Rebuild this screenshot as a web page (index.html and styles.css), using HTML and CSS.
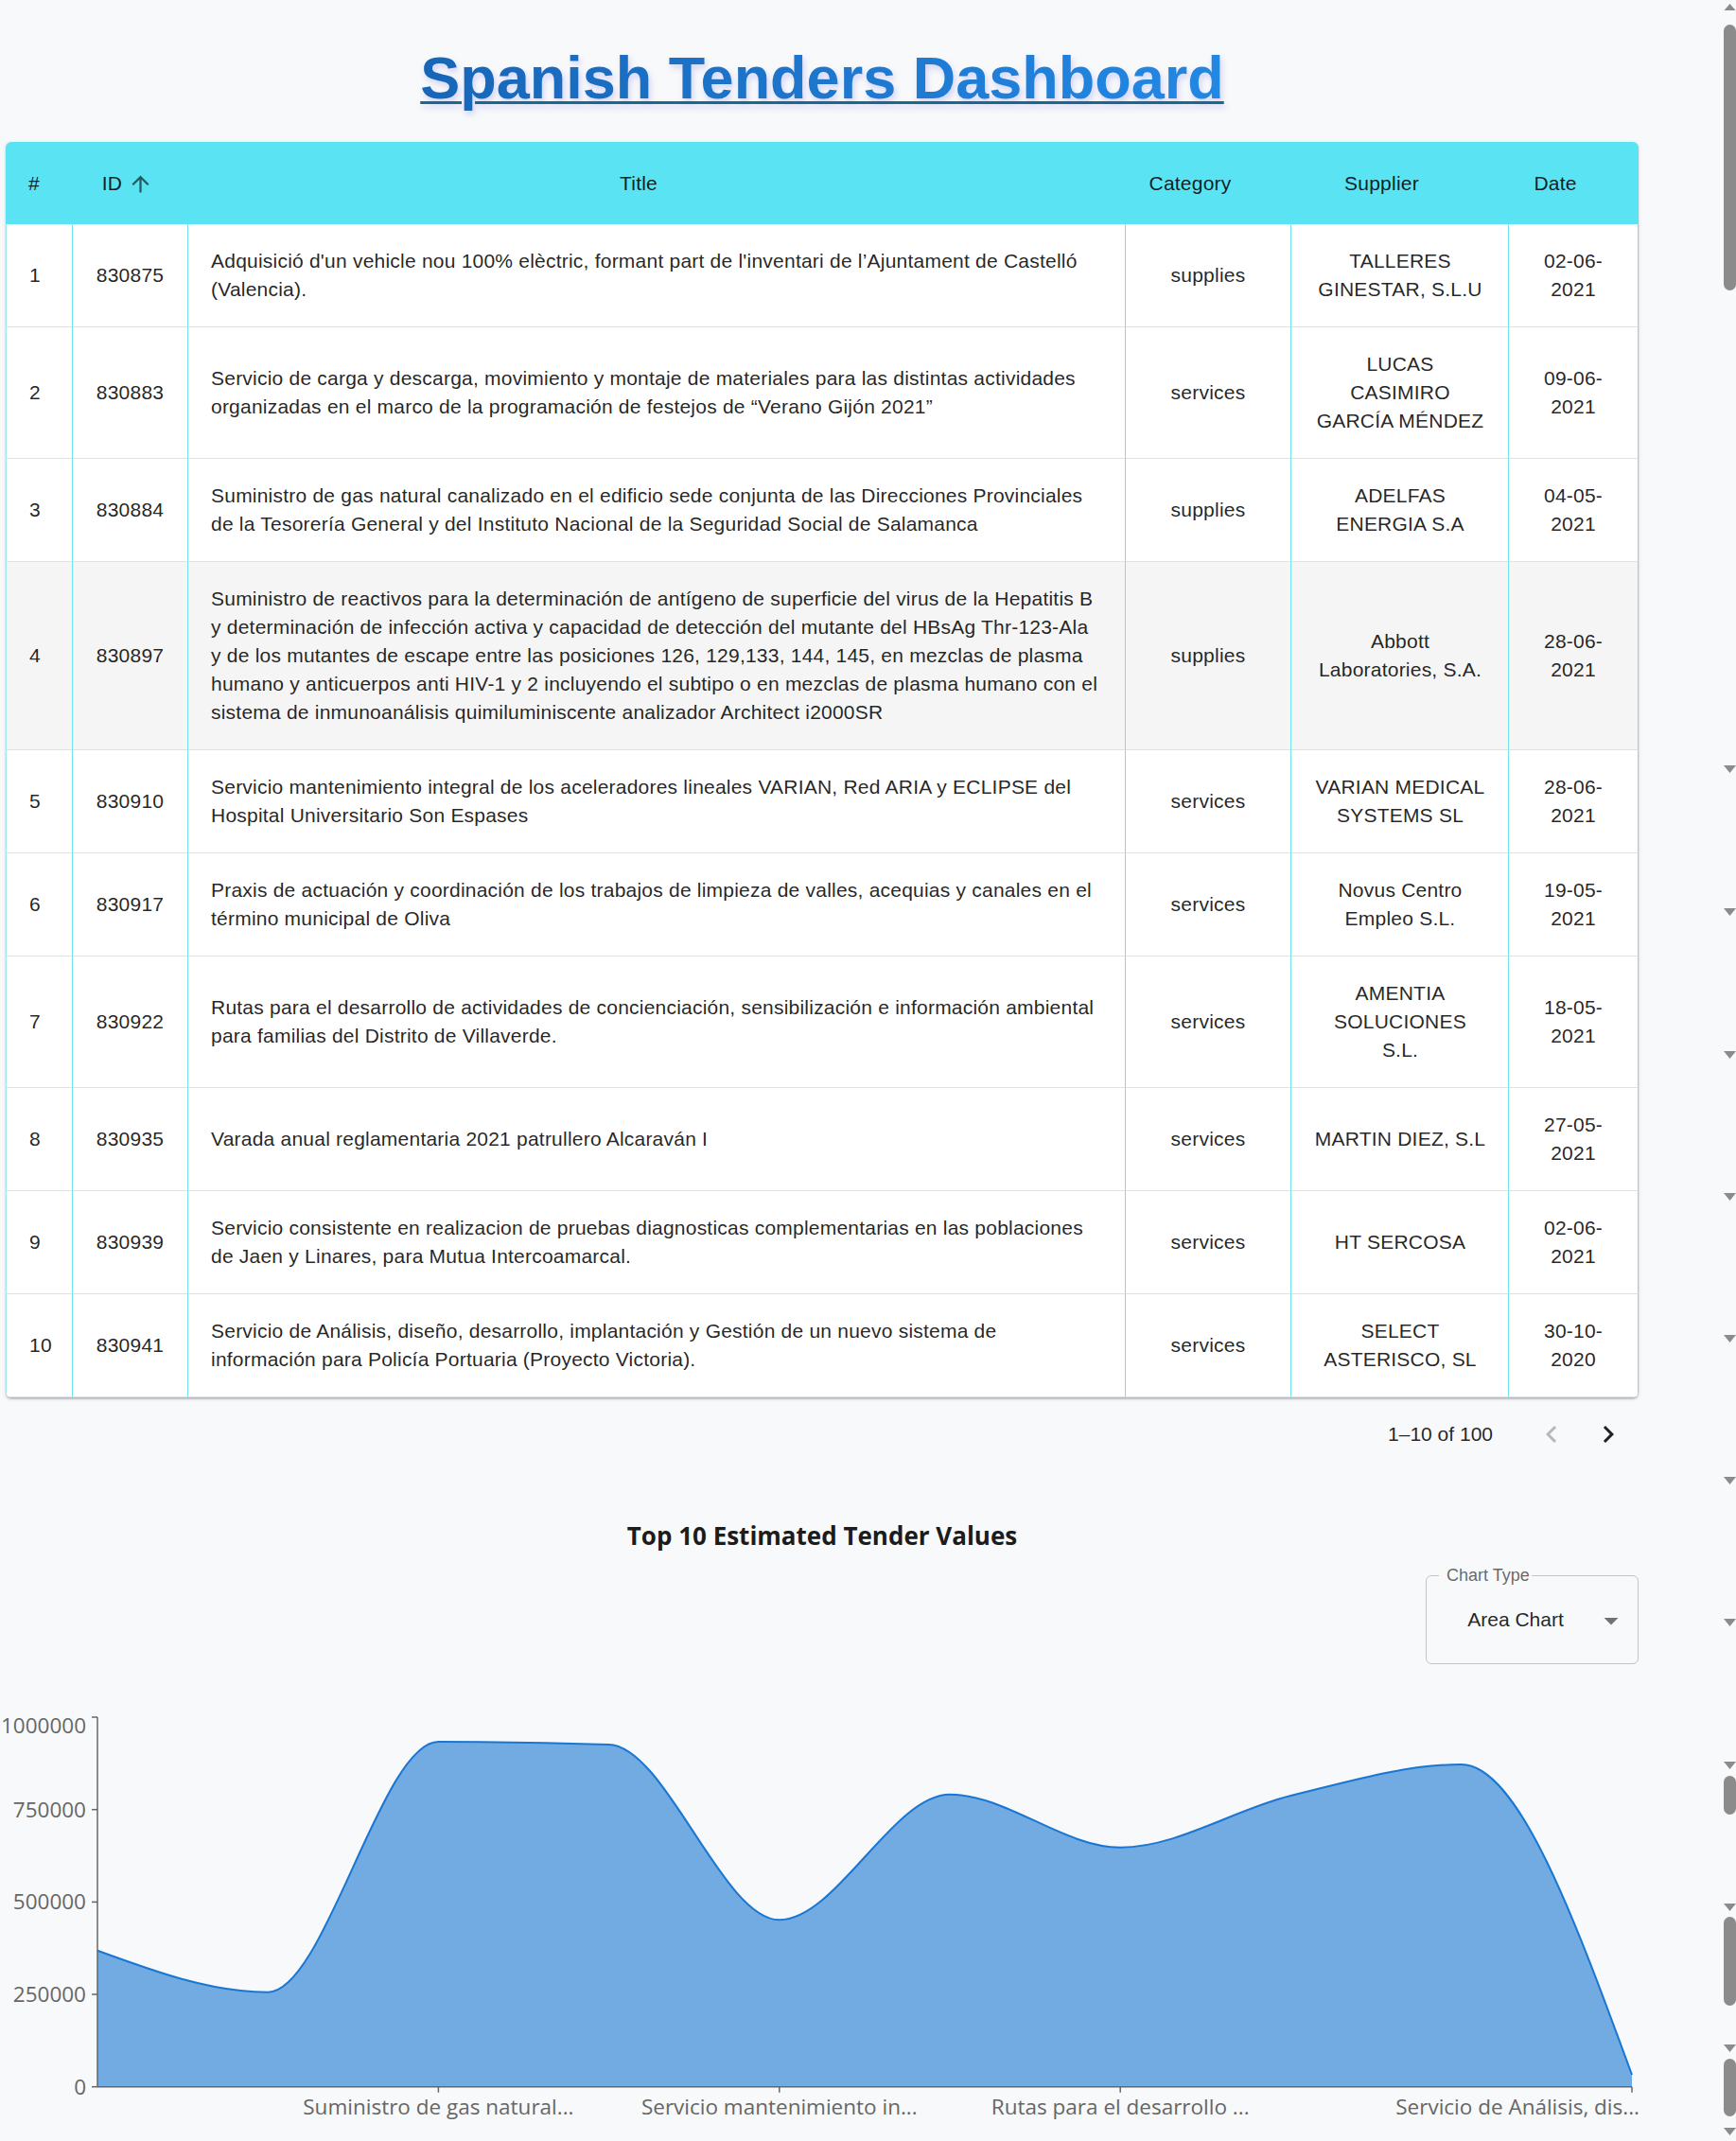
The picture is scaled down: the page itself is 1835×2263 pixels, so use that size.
FILE: index.html
```html
<!DOCTYPE html>
<html lang="es">
<head>
<meta charset="utf-8">
<title>Spanish Tenders Dashboard</title>
<link rel="stylesheet" href="styles.css">
</head>
<body>
<div class="page">
  <header class="title-wrap">
    <h1 class="title"><span class="title-inner" data-text="Spanish Tenders Dashboard"><span class="title-text">Spanish Tenders Dashboard</span></span></h1>
  </header>

  <div class="paper">
    <table class="tenders">
      <thead>
        <tr>
          <th class="c-num">#</th>
          <th class="c-id"><span class="sort-label">ID<svg class="sort-icon" viewBox="0 0 24 24"><path d="M4 12l1.41 1.41L11 7.83V20h2V7.83l5.58 5.59L20 12l-8-8-8 8z"/></svg></span></th>
          <th class="c-title"><span class="sort-label">Title<svg class="sort-icon off" viewBox="0 0 24 24"><path d="M4 12l1.41 1.41L11 7.83V20h2V7.83l5.58 5.59L20 12l-8-8-8 8z"/></svg></span></th>
          <th class="c-cat"><span class="sort-label">Category<svg class="sort-icon off" viewBox="0 0 24 24"><path d="M4 12l1.41 1.41L11 7.83V20h2V7.83l5.58 5.59L20 12l-8-8-8 8z"/></svg></span></th>
          <th class="c-sup"><span class="sort-label">Supplier<svg class="sort-icon off" viewBox="0 0 24 24"><path d="M4 12l1.41 1.41L11 7.83V20h2V7.83l5.58 5.59L20 12l-8-8-8 8z"/></svg></span></th>
          <th class="c-date"><span class="sort-label">Date<svg class="sort-icon off" viewBox="0 0 24 24"><path d="M4 12l1.41 1.41L11 7.83V20h2V7.83l5.58 5.59L20 12l-8-8-8 8z"/></svg></span></th>
        </tr>
      </thead>
      <tbody>
        <tr>
          <td class="num">1</td><td>830875</td>
          <td class="ttl">Adquisició d'un vehicle nou 100% elèctric, formant part de l'inventari de l’Ajuntament de Castelló (Valencia).</td>
          <td>supplies</td><td class="sup">TALLERES GINESTAR, S.L.U</td><td>02-06-2021</td>
        </tr>
        <tr>
          <td class="num">2</td><td>830883</td>
          <td class="ttl">Servicio de carga y descarga, movimiento y montaje de materiales para las distintas actividades organizadas en el marco de la programación de festejos de “Verano Gijón 2021”</td>
          <td>services</td><td class="sup">LUCAS CASIMIRO GARCÍA MÉNDEZ</td><td>09-06-2021</td>
        </tr>
        <tr>
          <td class="num">3</td><td>830884</td>
          <td class="ttl">Suministro de gas natural canalizado en el edificio sede conjunta de las Direcciones Provinciales de la Tesorería General y del Instituto Nacional de la Seguridad Social de Salamanca</td>
          <td>supplies</td><td class="sup">ADELFAS ENERGIA S.A</td><td>04-05-2021</td>
        </tr>
        <tr class="hover">
          <td class="num">4</td><td>830897</td>
          <td class="ttl">Suministro de reactivos para la determinación de antígeno de superficie del virus de la Hepatitis B y determinación de infección activa y capacidad de detección del mutante del HBsAg Thr-123-Ala y de los mutantes de escape entre las posiciones 126, 129,133, 144, 145, en mezclas de plasma humano y anticuerpos anti HIV-1 y 2 incluyendo el subtipo o en mezclas de plasma humano con el sistema de inmunoanálisis quimiluminiscente analizador Architect i2000SR</td>
          <td>supplies</td><td class="sup">Abbott Laboratories, S.A.</td><td>28-06-2021</td>
        </tr>
        <tr>
          <td class="num">5</td><td>830910</td>
          <td class="ttl">Servicio mantenimiento integral de los aceleradores lineales VARIAN, Red ARIA y ECLIPSE del Hospital Universitario Son Espases</td>
          <td>services</td><td class="sup">VARIAN MEDICAL SYSTEMS SL</td><td>28-06-2021</td>
        </tr>
        <tr>
          <td class="num">6</td><td>830917</td>
          <td class="ttl">Praxis de actuación y coordinación de los trabajos de limpieza de valles, acequias y canales en el término municipal de Oliva</td>
          <td>services</td><td class="sup">Novus Centro Empleo S.L.</td><td>19-05-2021</td>
        </tr>
        <tr>
          <td class="num">7</td><td>830922</td>
          <td class="ttl">Rutas para el desarrollo de actividades de concienciación, sensibilización e información ambiental para familias del Distrito de Villaverde.</td>
          <td>services</td><td class="sup">AMENTIA SOLUCIONES S.L.</td><td>18-05-2021</td>
        </tr>
        <tr>
          <td class="num">8</td><td>830935</td>
          <td class="ttl">Varada anual reglamentaria 2021 patrullero Alcaraván I</td>
          <td>services</td><td class="sup">MARTIN DIEZ, S.L</td><td>27-05-2021</td>
        </tr>
        <tr>
          <td class="num">9</td><td>830939</td>
          <td class="ttl">Servicio consistente en realizacion de pruebas diagnosticas complementarias en las poblaciones de Jaen y Linares, para Mutua Intercoamarcal.</td>
          <td>services</td><td class="sup">HT SERCOSA</td><td>02-06-2021</td>
        </tr>
        <tr>
          <td class="num">10</td><td>830941</td>
          <td class="ttl">Servicio de Análisis, diseño, desarrollo, implantación y Gestión de un nuevo sistema de información para Policía Portuaria (Proyecto Victoria).</td>
          <td>services</td><td class="sup">SELECT ASTERISCO, SL</td><td>30-10-2020</td>
        </tr>
      </tbody>
    </table>
  </div>

  <div class="pagination">
    <span class="pag-count">1–10 of 100</span>
    <div class="pag-actions">
      <span class="pag-btn disabled"><svg viewBox="0 0 24 24"><path d="M15.41 16.59L10.83 12l4.58-4.59L14 6l-6 6 6 6 1.41-1.41z"/></svg></span>
      <span class="pag-btn"><svg viewBox="0 0 24 24"><path d="M8.59 16.59L13.17 12 8.59 7.41 10 6l6 6-6 6-1.41-1.41z"/></svg></span>
    </div>
  </div>

  <h2 class="chart-heading">Top 10 Estimated Tender Values</h2>

  <div class="chart-controls">
    <div class="select">
      <span class="select-label">Chart Type</span>
      <span class="select-value">Area Chart</span>
      <svg class="select-arrow" viewBox="0 0 24 24"><path d="M7 10l5 5 5-5z"/></svg>
    </div>
  </div>
</div>

<svg class="chart" width="1740" height="483" viewBox="0 0 1740 483">
  <path class="area-fill" d="M103,281.7C163.07,303.7,223.13,325.7,283.2,325.7C343.27,325.7,403.33,61,463.4,61C523.47,61,583.53,62,643.6,64C703.67,66,763.73,249.3,823.8,249.3C883.87,249.3,943.93,116.7,1004,116.7C1064.07,116.7,1124.13,172.7,1184.2,172.7C1244.27,172.7,1304.33,132.6,1364.4,118C1424.47,103.4,1484.53,85,1544.6,85C1604.73,85,1664.87,249,1725,413L1725,425.7L103,425.7Z"/>
  <path class="area-line" d="M103,281.7C163.07,303.7,223.13,325.7,283.2,325.7C343.27,325.7,403.33,61,463.4,61C523.47,61,583.53,62,643.6,64C703.67,66,763.73,249.3,823.8,249.3C883.87,249.3,943.93,116.7,1004,116.7C1064.07,116.7,1124.13,172.7,1184.2,172.7C1244.27,172.7,1304.33,132.6,1364.4,118C1424.47,103.4,1484.53,85,1544.6,85C1604.73,85,1664.87,249,1725,413"/>
  <g class="axis">
    <line x1="103" y1="35" x2="103" y2="425.7"/>
    <line x1="97" y1="35" x2="103" y2="35"/>
    <line x1="97" y1="132.7" x2="103" y2="132.7"/>
    <line x1="97" y1="230.4" x2="103" y2="230.4"/>
    <line x1="97" y1="328" x2="103" y2="328"/>
    <line x1="97" y1="425.7" x2="103" y2="425.7"/>
    <line x1="103" y1="425.7" x2="1725" y2="425.7"/>
    <line x1="463.4" y1="425.7" x2="463.4" y2="431.7"/>
    <line x1="823.8" y1="425.7" x2="823.8" y2="431.7"/>
    <line x1="1184.2" y1="425.7" x2="1184.2" y2="431.7"/>
    <line x1="1725" y1="425.7" x2="1725" y2="431.7"/>
  </g>
  <g class="tick-labels">
    <text x="91" y="52" text-anchor="end">1000000</text>
    <text x="91" y="140.7" text-anchor="end">750000</text>
    <text x="91" y="238.4" text-anchor="end">500000</text>
    <text x="91" y="336" text-anchor="end">250000</text>
    <text x="91" y="433.7" text-anchor="end">0</text>
    <text x="463.4" y="455" text-anchor="middle">Suministro de gas natural...</text>
    <text x="823.8" y="455" text-anchor="middle">Servicio mantenimiento in...</text>
    <text x="1184.2" y="455" text-anchor="middle">Rutas para el desarrollo ...</text>
    <text x="1733" y="455" text-anchor="end">Servicio de Análisis, dis...</text>
  </g>
</svg>

<svg class="scrollbar" width="19" height="2263" viewBox="0 0 19 2263">
  <path d="M6.5 11 L12.5 4 L18.5 11 Z"/>
  <rect x="6" y="26" width="13" height="281" rx="6.5"/>
  <path d="M6 809 L19 809 L12.5 817 Z"/>
  <path d="M6 960 L19 960 L12.5 968 Z"/>
  <path d="M6 1111 L19 1111 L12.5 1119 Z"/>
  <path d="M6 1261 L19 1261 L12.5 1269 Z"/>
  <path d="M6 1411 L19 1411 L12.5 1419 Z"/>
  <path d="M6 1561 L19 1561 L12.5 1569 Z"/>
  <path d="M6 1711 L19 1711 L12.5 1719 Z"/>
  <path d="M6 1862 L19 1862 L12.5 1870 Z"/>
  <rect x="6" y="1877" width="13" height="41" rx="6.5"/>
  <path d="M6 2012 L19 2012 L12.5 2020 Z"/>
  <rect x="6" y="2026" width="13" height="94" rx="6.5"/>
  <path d="M6 2161 L19 2161 L12.5 2169 Z"/>
  <rect x="6" y="2176" width="13" height="61" rx="6.5"/>
  <path d="M6 2249 L19 2249 L12.5 2257 Z"/>
</svg>
</body>
</html>
```

FILE: styles.css
```css
* { box-sizing: border-box; }

html, body {
  margin: 0;
  padding: 0;
}

body {
  position: relative;
  width: 1835px;
  height: 2263px;
  overflow: hidden;
  background: #f8f9fa;
  font-family: "Liberation Sans", Arial, sans-serif;
  color: rgba(0, 0, 0, 0.87);
}

.page {
  width: 1732px;
  padding-left: 6px;
}

/* ---------- Title ---------- */
.title-wrap {
  height: 150px;
  padding-top: 47px;
}

.title {
  margin: 0;
  text-align: center;
  font: 700 63px/71px "Liberation Sans", Arial, sans-serif;
  filter: drop-shadow(2px 4px 3px rgba(100, 100, 240, 0.25));
}

.title-inner {
  position: relative;
  display: inline-block;
}

.title-text {
  display: inline-block;
  background: linear-gradient(90deg, #1766b8, #2388e3);
  -webkit-background-clip: text;
  background-clip: text;
  color: transparent;
  -webkit-text-fill-color: transparent;
}

/* underline drawn in its own colour on top of the gradient text */
.title-inner::after {
  content: attr(data-text);
  position: absolute;
  left: 0;
  top: 0;
  white-space: nowrap;
  color: transparent;
  -webkit-text-fill-color: transparent;
  text-decoration: underline;
  text-decoration-color: #176a8c;
  text-decoration-thickness: 3px;
  text-underline-offset: 3px;
}

/* ---------- Table ---------- */
.paper {
  background: #fff;
  border-radius: 6px;
  overflow: hidden;
  box-shadow: 0 3px 1.5px -3px rgba(0, 0, 0, 0.2),
              0 1.5px 1.5px 0 rgba(0, 0, 0, 0.14),
              0 1.5px 4.5px 0 rgba(0, 0, 0, 0.12);
}

.tenders {
  width: 100%;
  table-layout: fixed;
  border-collapse: separate;
  border-spacing: 0;
  font-size: 21px;
  line-height: 30px;
  letter-spacing: 0.22px;
}

.tenders th {
  height: 87px;
  padding: 0 24px;
  background: #5ae3f3;
  font-weight: 400;
  text-align: center;
  vertical-align: middle;
  color: rgba(0, 0, 0, 0.87);
}

.tenders th.c-num { width: 71px; text-align: left; }
.tenders th.c-id { width: 122px; }
.tenders th.c-title { width: 991px; }
.tenders th.c-cat { width: 175px; }
.tenders th.c-sup { width: 230px; }
.tenders th.c-date { width: 137px; }

.sort-label {
  display: inline-flex;
  align-items: center;
  vertical-align: middle;
}

.sort-icon {
  width: 27px;
  height: 27px;
  margin: 0 6px;
  fill: rgba(0, 0, 0, 0.6);
}

.sort-icon.off { opacity: 0; }

.tenders td {
  padding: 24px;
  text-align: center;
  vertical-align: middle;
  border-bottom: 1px solid #e0e0e0;
  border-right: 1px solid #6fe2ef;
  color: rgba(0, 0, 0, 0.87);
}

.tenders td.num {
  text-align: left;
  border-left: 1px solid #9fe6ee;
}

.tenders td.ttl { text-align: left; }

.tenders td.sup {
  padding-left: 24px;
  padding-right: 23px;
}

.tenders tr.hover td { background: #f5f5f5; }

/* ---------- Pagination ---------- */
.pagination {
  display: flex;
  justify-content: flex-end;
  align-items: center;
  height: 78px;
  padding-right: 2px;
  font-size: 21px;
  color: rgba(0, 0, 0, 0.87);
}

.pag-actions {
  display: flex;
  margin-left: 32px;
}

.pag-btn {
  display: flex;
  align-items: center;
  justify-content: center;
  width: 60px;
  height: 60px;
}

.pag-btn svg {
  width: 36px;
  height: 36px;
  fill: rgba(0, 0, 0, 0.87);
}

.pag-btn.disabled svg { fill: rgba(0, 0, 0, 0.26); }

/* ---------- Chart section ---------- */
.chart-heading {
  margin: 50px 0 0;
  height: 36px;
  text-align: center;
  font: 700 26px/36px "Open Sans", "Noto Sans", sans-serif;
  color: #1c1c1c;
}

.chart-controls {
  display: flex;
  justify-content: flex-end;
  margin-top: 24px;
}

.select {
  position: relative;
  display: flex;
  align-items: center;
  width: 225px;
  height: 94px;
  padding: 0 56px 0 21px;
  border: 1px solid #c4c4c4;
  border-radius: 6px;
}

.select-label {
  position: absolute;
  left: 13px;
  top: -11px;
  padding: 0 2px 0 8px;
  background: #f8f9fa;
  font-size: 18px;
  line-height: 20px;
  color: rgba(0, 0, 0, 0.6);
}

.select-value {
  flex: 1;
  text-align: center;
  font-size: 21px;
  color: rgba(0, 0, 0, 0.87);
  white-space: nowrap;
}

.select-arrow {
  position: absolute;
  right: 10px;
  top: 29px;
  width: 36px;
  height: 36px;
  fill: rgba(0, 0, 0, 0.54);
}

.chart {
  display: block;
  margin-top: 21px;
  overflow: visible;
}

.area-fill {
  fill: #1976d2;
  fill-opacity: 0.6;
}

.area-line {
  fill: none;
  stroke: #1976d2;
  stroke-width: 2;
}

.axis line {
  stroke: #666;
  stroke-width: 1.5;
}

.tick-labels text {
  font-family: "Open Sans", "Noto Sans", sans-serif;
  font-size: 22.5px;
  fill: #666;
}

/* ---------- Fake window scrollbar ---------- */
.scrollbar {
  position: absolute;
  top: 0;
  right: 0;
  fill: #8b8b8b;
}
```
